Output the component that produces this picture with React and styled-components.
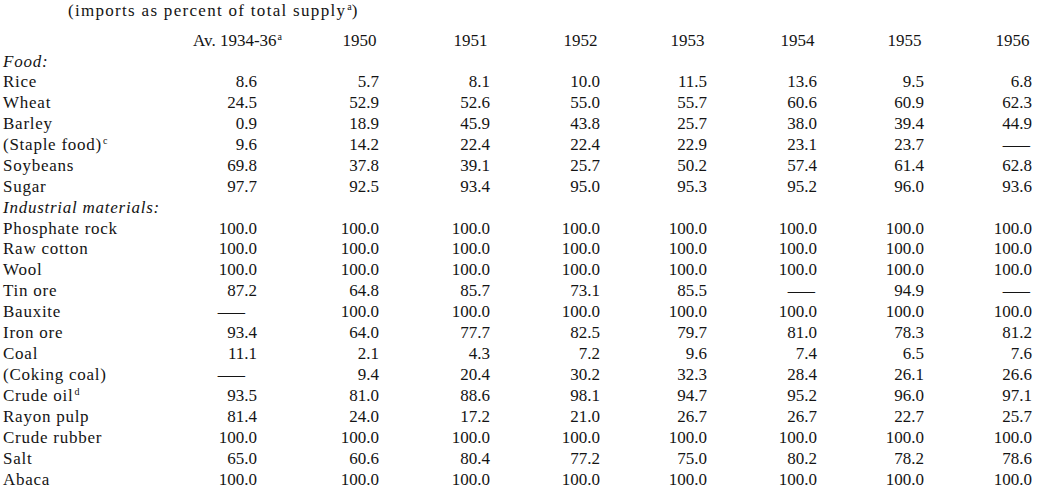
import React from "react";
import styled, { createGlobalStyle } from "styled-components";

const Global = createGlobalStyle`
  html, body { margin: 0; padding: 0; background: #ffffff; }
  body {
    font-family: "Liberation Serif", "Times New Roman", serif;
    color: #141414;
    font-size: 17px;
  }
`;

const Page = styled.div`
  padding: 0 0 0 3px;
  width: 1040px;
  box-sizing: border-box;
`;

const Title = styled.div`
  margin-left: 65px;
  line-height: 21px;
  letter-spacing: 1.3px;
  margin-bottom: 9px;
`;

const Sup = styled.span`
  font-size: 10px;
  line-height: 0;
  position: relative;
  top: -6px;
  margin-left: 1px;
  letter-spacing: 0;
`;

const Table = styled.div`
  display: flex;
  flex-direction: column;
`;

const Row = styled.div`
  display: grid;
  grid-template-columns: 197px 57px 122px 111px 110px 107px 110px 107px 108px;
  box-sizing: border-box;
  height: ${(p) => p.$h || 20.95}px;
  padding-top: ${(p) => ((p.$h || 20.95) - 17) / 2}px;
  line-height: 17px;
  white-space: nowrap;
`;

const Label = styled.div`
  letter-spacing: 0.75px;
  font-style: ${(p) => (p.$italic ? "italic" : "normal")};
`;

const Value = styled.div`
  text-align: right;
`;

const HeadCell = styled.div`
  display: flex;
  justify-content: flex-end;
`;

const HeadInner = styled.div`
  width: 39px;
  display: flex;
  justify-content: center;
`;

const HeadText = styled.span`
  white-space: nowrap;
`;

const Dash = styled.span`
  display: inline-block;
  transform: scaleX(1.6);
  transform-origin: right center;
  margin-right: ${(p) => p.$offset || 2}px;
`;

const years = ["1950", "1951", "1952", "1953", "1954", "1955", "1956"];

const groups = [
  {
    title: "Food:",
    rows: [
      ["Rice", null, ["8.6", "5.7", "8.1", "10.0", "11.5", "13.6", "9.5", "6.8"]],
      ["Wheat", null, ["24.5", "52.9", "52.6", "55.0", "55.7", "60.6", "60.9", "62.3"]],
      ["Barley", null, ["0.9", "18.9", "45.9", "43.8", "25.7", "38.0", "39.4", "44.9"]],
      ["(Staple food)", "c", ["9.6", "14.2", "22.4", "22.4", "22.9", "23.1", "23.7", "—"]],
      ["Soybeans", null, ["69.8", "37.8", "39.1", "25.7", "50.2", "57.4", "61.4", "62.8"]],
      ["Sugar", null, ["97.7", "92.5", "93.4", "95.0", "95.3", "95.2", "96.0", "93.6"]],
    ],
  },
  {
    title: "Industrial materials:",
    rows: [
      ["Phosphate rock", null, Array(8).fill("100.0")],
      ["Raw cotton", null, Array(8).fill("100.0")],
      ["Wool", null, Array(8).fill("100.0")],
      ["Tin ore", null, ["87.2", "64.8", "85.7", "73.1", "85.5", "—", "94.9", "—"]],
      ["Bauxite", null, ["—", "100.0", "100.0", "100.0", "100.0", "100.0", "100.0", "100.0"]],
      ["Iron ore", null, ["93.4", "64.0", "77.7", "82.5", "79.7", "81.0", "78.3", "81.2"]],
      ["Coal", null, ["11.1", "2.1", "4.3", "7.2", "9.6", "7.4", "6.5", "7.6"]],
      ["(Coking coal)", null, ["—", "9.4", "20.4", "30.2", "32.3", "28.4", "26.1", "26.6"]],
      ["Crude oil", "d", ["93.5", "81.0", "88.6", "98.1", "94.7", "95.2", "96.0", "97.1"]],
      ["Rayon pulp", null, ["81.4", "24.0", "17.2", "21.0", "26.7", "26.7", "22.7", "25.7"]],
      ["Crude rubber", null, Array(8).fill("100.0")],
      ["Salt", null, ["65.0", "60.6", "80.4", "77.2", "75.0", "80.2", "78.2", "78.6"]],
      ["Abaca", null, Array(8).fill("100.0")],
    ],
  },
];

function Cell({ v, i }) {
  if (v === "—") {
    return (
      <Value>
        <Dash $offset={i === 0 ? 12 : 2}>—</Dash>
      </Value>
    );
  }
  return <Value>{v}</Value>;
}

export default function App() {
  return (
    <>
      <Global />
      <Page>
        <Title>
          (imports as percent of total supply<Sup>a</Sup>)
        </Title>
        <Table>
          <Row $h={21}>
            <Label />
            <HeadCell>
              <HeadInner>
                <HeadText>
                  Av. 1934-36<Sup>a</Sup>
                </HeadText>
              </HeadInner>
            </HeadCell>
            {years.map((y) => (
              <HeadCell key={y}>
                <HeadInner>
                  <HeadText>{y}</HeadText>
                </HeadInner>
              </HeadCell>
            ))}
          </Row>
          {groups.map((g, gi) => (
            <React.Fragment key={g.title}>
              <Row $h={gi === 0 ? 20 : 20.95}>
                <Label $italic>{g.title}</Label>
              </Row>
              {g.rows.map(([name, sup, vals]) => (
                <Row key={name}>
                  <Label>
                    {name}
                    {sup && <Sup>{sup}</Sup>}
                  </Label>
                  {vals.map((v, i) => (
                    <Cell key={i} v={v} i={i} />
                  ))}
                </Row>
              ))}
            </React.Fragment>
          ))}
        </Table>
      </Page>
    </>
  );
}
